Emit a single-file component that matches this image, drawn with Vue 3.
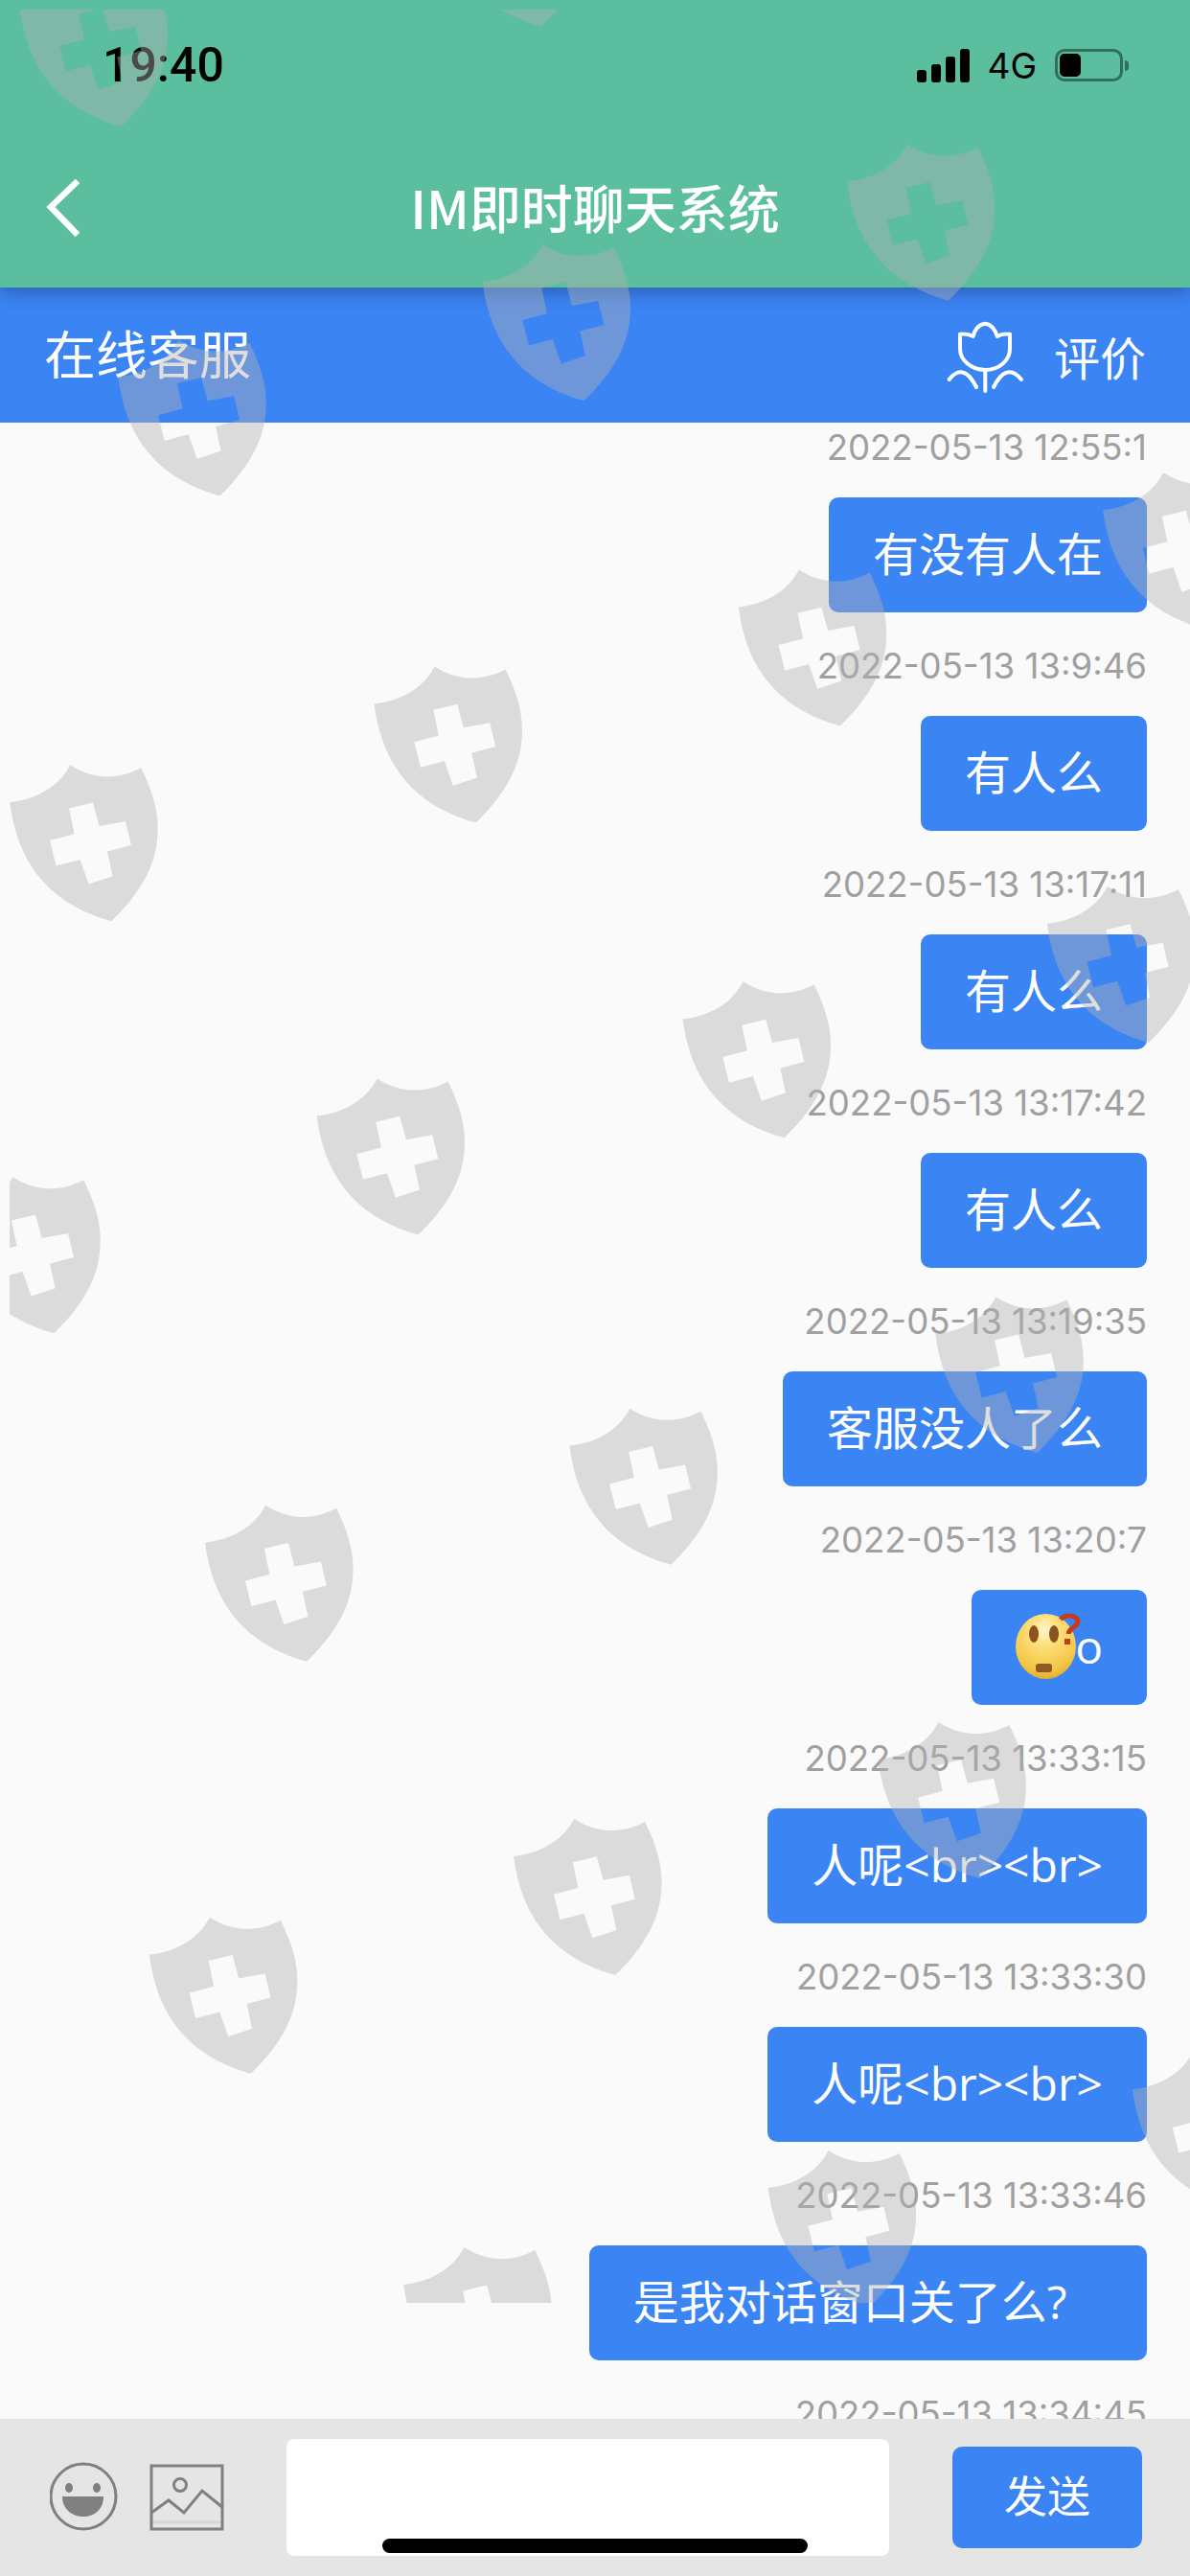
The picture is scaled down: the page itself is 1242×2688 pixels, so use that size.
<script setup>
const shields = [
  [12, -18], [268, -79], [516, 88], [294, 149], [72, 207], [6, 466], [228, 406], [450, 347], [672, 288],
  [193, 657], [416, 598], [638, 540], [-29, 717], [125, 917], [347, 858], [570, 790], [91, 1168], [313, 1108],
  [535, 1049], [690, 1250], [468, 1310], [246, 1369],
].map(([x, y]) => ({ x: x * 1.713 - 10, y: y * 1.713 - 10 }));

const messages = [
  { time: '2022-05-13 12:55:1', text: '有没有人在' },
  { time: '2022-05-13 13:9:46', text: '有人么' },
  { time: '2022-05-13 13:17:11', text: '有人么' },
  { time: '2022-05-13 13:17:42', text: '有人么' },
  { time: '2022-05-13 13:19:35', text: '客服没人了么' },
  { time: '2022-05-13 13:20:7', text: 'o', emoji: true },
  { time: '2022-05-13 13:33:15', text: '人呢<br><br>' },
  { time: '2022-05-13 13:33:30', text: '人呢<br><br>' },
  { time: '2022-05-13 13:33:46', text: '是我对话窗口关了么?   ' },
  { time: '2022-05-13 13:34:45', text: '' },
];
</script>

<template>
  <div class="page">
    <header class="head">
      <div class="status">
        <span class="clock">19:40</span>
        <div class="status-right">
          <div class="signal"><i class="b1"></i><i class="b2"></i><i class="b3"></i><i class="b4"></i></div>
          <span class="net">4G</span>
          <div class="battery"><i></i></div>
          <div class="battery-cap"></div>
        </div>
      </div>
      <div class="nav">
        <svg class="back" width="36" height="60" viewBox="0 0 36 60">
          <path d="M33 2 L5 29 L33 58" fill="none" stroke="#fff" stroke-width="6.5" />
        </svg>
        <span class="title">IM即时聊天系统</span>
      </div>
    </header>

    <div class="service">
      <span class="service-name">在线客服</span>
      <div class="rate">
        <svg width="100" height="90" viewBox="0 0 100 90" fill="none" stroke="#fff" stroke-width="4" stroke-linecap="round" stroke-linejoin="round">
          <path d="M49.3 11.7 C43 12 38 18 36.7 25 C33 23 28 22 23 22.7 V38 C23 50 35 60 49.3 60 C64 60 75 50 75 38 V22.7 C70 22 65 23 61.7 25 C60 18 55 12 49.3 11.7 Z" />
          <path d="M49.3 60 V82" />
          <path d="M11.7 70 C16 64 22 61 27 63 C33 65 37 72 40 78" />
          <path d="M87 70 C82 64 76 61 71 63 C65 65 61 72 58 78" />
        </svg>
        <span class="rate-text">评价</span>
      </div>
    </div>

    <main class="list">
      <div v-for="(m, i) in messages" :key="i" class="msg">
        <div class="time">{{ m.time }}</div>
        <div v-if="m.text" class="bubble">
          <svg v-if="m.emoji" class="emoji" width="62" height="68" viewBox="0 0 62 68">
            <defs>
              <radialGradient id="face" cx="0.48" cy="0.25" r="0.78">
                <stop offset="0" stop-color="#fff6cf" />
                <stop offset="0.3" stop-color="#fde07a" />
                <stop offset="0.8" stop-color="#f3c545" />
                <stop offset="1" stop-color="#dfa72c" />
              </radialGradient>
            </defs>
            <ellipse cx="31.5" cy="34" rx="31.5" ry="34" fill="url(#face)" />
            <ellipse cx="19" cy="21" rx="5" ry="9" fill="#8a5320" />
            <ellipse cx="40" cy="21" rx="5" ry="9" fill="#8a5320" />
            <rect x="21" y="52" width="17" height="9" rx="3" fill="#8f5a22" />
            <path d="M47 6 C52 0 64 1 65 8 C65 14 56 14 55 21" fill="none" stroke="#c93a1c" stroke-width="5" />
            <rect x="51" y="26" width="6" height="6" fill="#c93a1c" />
          </svg>{{ m.text }}
        </div>
      </div>
    </main>

    <footer class="bar">
      <svg class="smile" width="72" height="74" viewBox="0 0 72 74">
        <circle cx="35" cy="36" r="34" fill="none" stroke="#808080" stroke-width="3" />
        <ellipse cx="20" cy="27" rx="4" ry="5" fill="#808080" />
        <ellipse cx="49" cy="27" rx="4" ry="5" fill="#808080" />
        <path d="M13 36 H56 C56 50 46 57 35 57 C24 57 13 50 13 36 Z" fill="#808080" />
      </svg>
      <svg class="pic" width="78" height="70" viewBox="0 0 78 70" fill="none" stroke="#808080" stroke-width="3">
        <rect x="2" y="2" width="74" height="66" />
        <circle cx="32" cy="22" r="6.5" />
        <path d="M2 51 L20 38 L36 51 L55 28 L77 46" />
        <path d="M3 61 H75" stroke-opacity="0.15" />
      </svg>
      <div class="input"></div>
      <div class="send">发送</div>
    </footer>
    <div class="home"></div>

    <svg class="marks" width="1232" height="2393" viewBox="0 0 1232 2393">
      <path
        v-for="(s, i) in shields"
        :key="i"
        :transform="`translate(${s.x} ${s.y})`"
        fill="rgb(177,177,177)"
        fill-opacity="0.425"
        fill-rule="evenodd"
        d="M63 0 C85 14 110 17 137 3 C150 30 156 50 154 75 C152 110 130 140 106 163 C60 150 10 120 0 39 C25 36 50 25 63 0 Z
           M61.7 45.3 L86.7 39.3 L93.3 63.7 L120.7 58.7 L126.7 83.7 L101.7 90.3 L107.3 116 L82.3 124.3 L73.3 98.7 L48.3 105.3 L41.7 78.7 L67.3 72 Z"
      />
    </svg>
  </div>
</template>

<style scoped>
.page {
  position: relative;
  width: 1242px;
  height: 2688px;
  overflow: hidden;
  display: flex;
  flex-direction: column;
  background: #fafafa;
  font-family: "Liberation Sans", "Noto Sans CJK SC", sans-serif;
}

.head {
  position: relative;
  z-index: 1;
  height: 300px;
  background: #5abe9f;
  box-shadow: 0 4px 18px rgba(0, 0, 0, 0.3);
}

.status {
  display: flex;
  justify-content: space-between;
  align-items: center;
  height: 136px;
  padding: 0 64px 0 107px;
}

.clock {
  font-family: Roboto, sans-serif;
  font-size: 50px;
  font-weight: 500;
  color: #000;
}

.status-right {
  display: flex;
  align-items: center;
}

.signal {
  display: flex;
  align-items: flex-end;
  gap: 5px;
  height: 35px;
}

.signal i {
  width: 10px;
  border-radius: 3px;
  background: #000;
}

.b1 { height: 13px; }
.b2 { height: 19px; }
.b3 { height: 27px; }
.b4 { height: 35px; }

.net {
  margin-left: 18px;
  font-family: Inter, sans-serif;
  font-size: 37px;
  color: #000;
}

.battery {
  display: flex;
  align-items: center;
  width: 71px;
  height: 34px;
  margin-left: 19px;
  padding: 0 2px;
  box-sizing: border-box;
  border: 3px solid #2f6f5c;
  border-radius: 10px;
}

.battery i {
  width: 22px;
  height: 24px;
  border-radius: 5px;
  background: #000;
}

.battery-cap {
  width: 4px;
  height: 11px;
  margin-left: 2px;
  border-radius: 0 4px 4px 0;
  background: #2f6f5c;
}

.nav {
  position: relative;
  display: flex;
  align-items: center;
  justify-content: center;
  height: 164px;
  padding-bottom: 6px;
  box-sizing: border-box;
}

.back {
  position: absolute;
  left: 48px;
  top: 51px;
}

.title {
  font-family: "Noto Sans CJK SC", sans-serif;
  font-size: 54px;
  font-weight: 500;
  color: #fff;
}

.service {
  display: flex;
  justify-content: space-between;
  align-items: center;
  height: 141px;
  padding: 0 46px 0 46px;
  background: #3b84f4;
  color: #fff;
}

.service-name {
  padding-bottom: 6px;
  font-size: 54px;
}

.rate {
  display: flex;
  align-items: center;
  gap: 21px;
}

.rate-text {
  font-size: 48px;
}

.list {
  flex: 1;
  min-height: 0;
  overflow: hidden;
  display: flex;
  flex-direction: column;
  align-items: flex-end;
  padding-right: 45px;
}

.msg {
  display: flex;
  flex-direction: column;
  align-items: flex-end;
  margin-bottom: 30px;
}

.time {
  height: 52px;
  margin-bottom: 26px;
  font-family: Inter, sans-serif;
  font-size: 36.6px;
  line-height: 52px;
  color: #a0a0a0;
}

.bubble {
  display: flex;
  align-items: flex-end;
  height: 120px;
  box-sizing: border-box;
  padding: 0 46px;
  border-radius: 10px;
  background: #3b84f4;
  font-family: "Open Sans", "Noto Sans CJK SC", sans-serif;
  font-size: 48px;
  line-height: 123px;
  white-space: pre;
  color: #fff;
}

.emoji {
  margin-bottom: 27px;
  overflow: visible;
}

.bar {
  position: relative;
  display: flex;
  align-items: center;
  flex-shrink: 0;
  height: 164px;
  padding: 0 50px 0 52px;
  background: #e5e5e5;
}

.pic {
  margin-left: 32px;
}

.input {
  width: 629px;
  height: 122px;
  margin-left: 65px;
  border-radius: 8px;
  background: #fff;
}

.send {
  width: 198px;
  height: 106px;
  margin-left: 66px;
  border-radius: 10px;
  background: #3b84f4;
  font-size: 45px;
  line-height: 108px;
  text-align: center;
  color: #fff;
}

.home {
  position: absolute;
  left: 399px;
  top: 2649px;
  width: 444px;
  height: 15px;
  border-radius: 8px;
  background: #000;
}

.marks {
  position: absolute;
  z-index: 2;
  left: 10px;
  top: 10px;
  pointer-events: none;
}
</style>
